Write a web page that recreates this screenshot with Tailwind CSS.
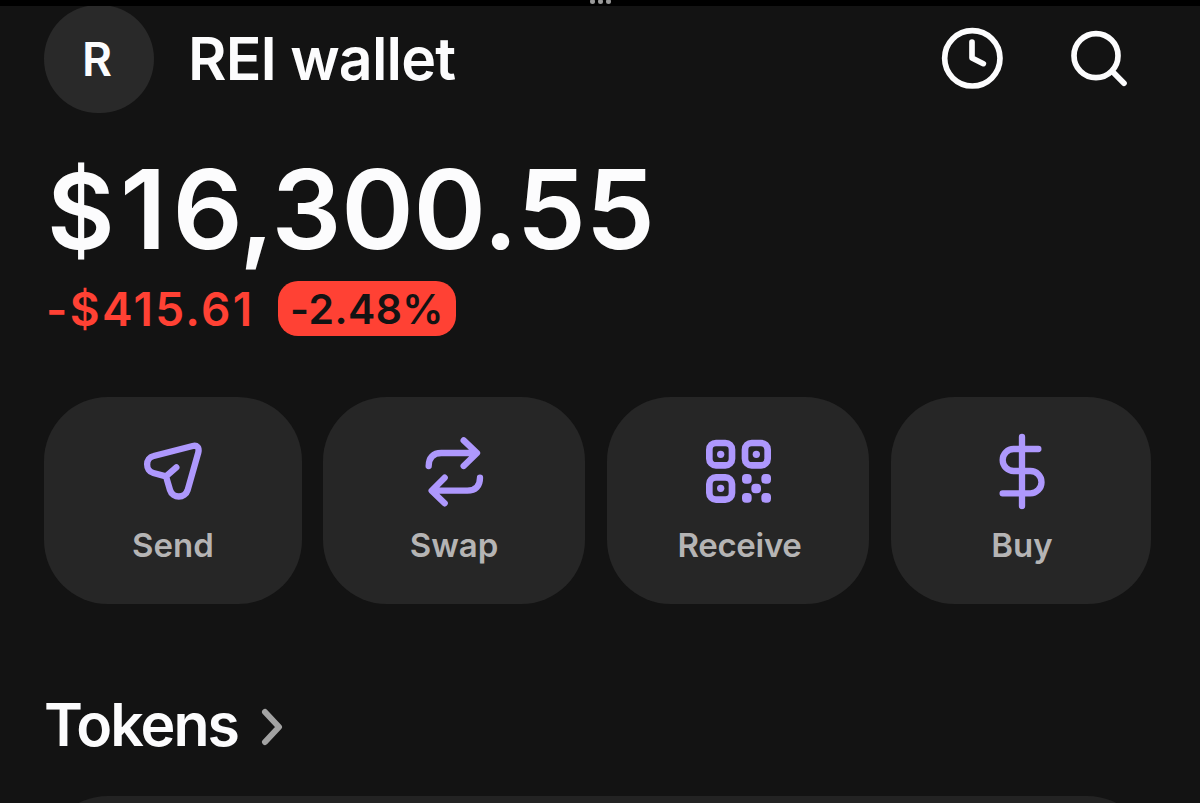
<!DOCTYPE html>
<html lang="en">
<head>
  <meta charset="UTF-8">
  <meta name="viewport" content="width=device-width, initial-scale=1.0">
  <script src="https://cdn.jsdelivr.net/npm/@tailwindcss/browser@4"></script>
  <title>REI wallet</title>
</head>
<body class="bg-[#131313] font-['Inter',sans-serif] font-semibold text-[#fcfcfd]">

  <div class="w-[1200px] h-[803px] overflow-hidden flex flex-col">
    <!-- Top handle -->
    <div class="h-[6px] shrink-0 bg-black flex justify-center gap-[3px] overflow-hidden">
      <span class="w-[5px] h-[5px] -mt-px rounded-full bg-[#9a9a9a]"></span>
      <span class="w-[5px] h-[5px] -mt-px rounded-full bg-[#9a9a9a]"></span>
      <span class="w-[5px] h-[5px] -mt-px rounded-full bg-[#9a9a9a]"></span>
    </div>

    <!-- Header -->
    <header class="h-[107px] shrink-0 flex items-end pl-[44px] pr-[60px] overflow-hidden">
      <div class="w-[110px] h-[108px] shrink-0 rounded-full bg-[#292929] flex items-center justify-center text-[46px] pr-[4px]">R</div>
      <h1 class="ml-[34px] h-[108px] leading-[108px] text-[59px] tracking-[-0.8px] whitespace-nowrap">REI wallet</h1>
      <div class="ml-auto h-[107px] flex">
        <svg class="w-[90px] h-[90px] mt-[6px]" viewBox="82 36 270 270" fill="none" stroke="currentColor" stroke-width="17" stroke-linecap="round" stroke-linejoin="round">
          <circle cx="218" cy="175" r="83"/>
          <path d="M217 126V174L251 191"/>
        </svg>
        <svg class="w-[90px] h-[90px] ml-[33px] mt-[6px]" viewBox="451 36 270 270" fill="none" stroke="currentColor" stroke-width="17" stroke-linecap="round">
          <circle cx="589" cy="167" r="66"/>
          <path d="M639 215L673 250"/>
        </svg>
      </div>
    </header>

    <!-- Balance -->
    <section class="pl-[47px] h-[284px] shrink-0 pt-[36px]">
      <p class="flex items-baseline h-[120px] text-[110px] leading-[120px] tracking-[-0.2px] whitespace-nowrap"><span class="w-[73px] text-[104px]">$</span><span class="tracking-[6px]">1</span><span>6,300.55</span></p>
      <div class="flex items-center mt-[12px] h-[55px]">
        <span class="w-[232px] -ml-[1px] pt-[2px] text-[46px] tracking-[2.3px] text-[#ff4134] whitespace-nowrap">-$415.61</span>
        <span class="w-[178px] h-[55px] rounded-[20px] bg-[#ff4134] text-[#131313] text-[41px] leading-[57px] tracking-[0.4px] text-center whitespace-nowrap">-2.48%</span>
      </div>
    </section>

    <!-- Actions -->
    <section class="flex pl-[44px] h-[207px] shrink-0 text-[33px] text-[#b5b4b4]">
      <div class="w-[258px] rounded-[64px] bg-[#262626] flex flex-col items-center pt-[28px]">
        <svg class="w-[90px] h-[90px] text-[#ae98fd]" viewBox="-6 0 270 270" fill="none" stroke="currentColor" stroke-width="19" stroke-linecap="round" stroke-linejoin="round">
          <path d="M188 63L71 93C45 99 45 137 70 144L108 154L120 195C128 221 165 221 173 195L205 82C208 68 202 60 188 63ZM108 154L139 127"/>
        </svg>
        <span class="mt-[10px] leading-[40px]">Send</span>
      </div>
      <div class="w-[262px] ml-[21px] rounded-[64px] bg-[#262626] flex flex-col items-center pt-[28px]">
        <svg class="w-[90px] h-[90px] text-[#ae98fd]" viewBox="-3 0 270 270" fill="none" stroke="currentColor" stroke-width="19" stroke-linecap="round" stroke-linejoin="round">
          <path d="M56 123C56 98 69 84 94 84H200M161 46L201 84L161 123M210 158C210 183 197 197 172 197H66M104 158L65 197L104 235"/>
        </svg>
        <span class="mt-[10px] leading-[40px]">Swap</span>
      </div>
      <div class="w-[262px] ml-[22px] rounded-[64px] bg-[#262626] flex flex-col items-center pt-[28px]">
        <svg class="w-[90px] h-[90px] text-[#ae98fd]" viewBox="-6 -15 270 270" fill="currentColor">
          <g fill="none" stroke="currentColor" stroke-width="20">
            <rect x="43" y="39" width="68" height="67" rx="20"/>
            <rect x="150" y="39" width="68" height="67" rx="20"/>
            <rect x="43" y="142" width="68" height="67" rx="20"/>
          </g>
          <circle cx="77" cy="73" r="11"/>
          <circle cx="184" cy="73" r="11"/>
          <circle cx="77" cy="175" r="11"/>
          <rect x="141" y="132" width="29" height="29" rx="12"/>
          <rect x="199" y="132" width="29" height="29" rx="12"/>
          <rect x="169" y="161" width="29" height="29" rx="12"/>
          <rect x="141" y="189" width="29" height="29" rx="12"/>
          <rect x="199" y="189" width="29" height="29" rx="12"/>
        </svg>
        <span class="mt-[10px] pl-[3px] leading-[40px] tracking-[-0.3px]">Receive</span>
      </div>
      <div class="w-[260px] ml-[22px] rounded-[64px] bg-[#262626] flex flex-col items-center pt-[28px]">
        <svg class="w-[90px] h-[90px] text-[#ae98fd]" viewBox="-12 0 270 270" fill="none" stroke="currentColor" stroke-width="19" stroke-linecap="round">
          <path d="M126 36V243M175 72H101A33 33 0 0 0 101 138H151A33 33 0 0 1 151 205H68"/>
        </svg>
        <span class="mt-[10px] pl-[2px] leading-[40px]">Buy</span>
      </div>
    </section>

    <!-- Tokens -->
    <div class="flex items-center h-[72px] mt-[86px] pl-[44px] shrink-0">
      <h2 class="w-[217px] h-[72px] text-[59px] tracking-[-2px] leading-[70px] whitespace-nowrap">Tokens</h2>
      <svg class="w-[24px] h-[40px]" viewBox="0 0 24 40" fill="none" stroke="#a3a3a3" stroke-width="6" stroke-linecap="round" stroke-linejoin="round">
        <path d="M4 6L18 21L4 36"/>
      </svg>
    </div>
    <div class="mt-[34px] ml-[44px] w-[1107px] h-[140px] shrink-0 rounded-[64px] bg-[#232323]"></div>
  </div>

</body>
</html>
